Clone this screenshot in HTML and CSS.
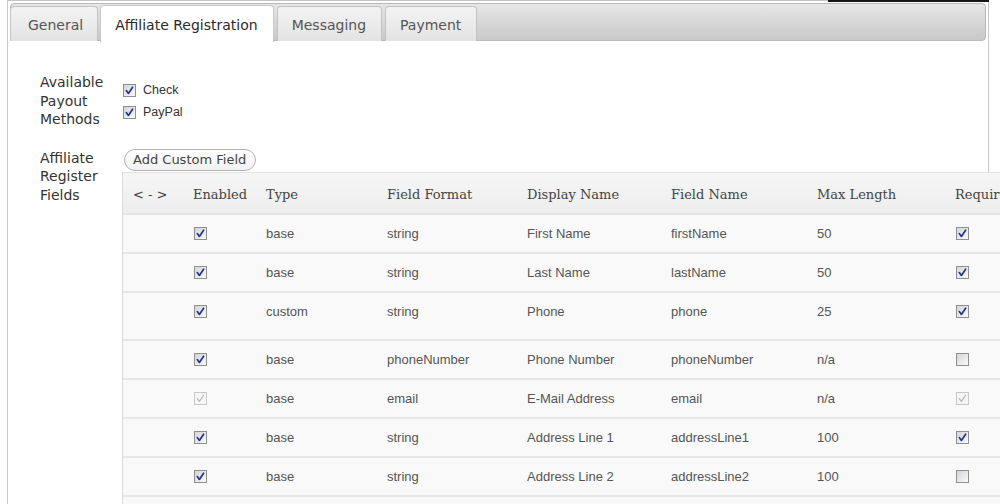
FILE: index.html
```html
<!DOCTYPE html>
<html>
<head>
<meta charset="utf-8">
<title>Affiliate Settings</title>
<link rel="stylesheet" href="styles.css">
</head>
<body>
<div class="panel">
  <div class="tabbar">
    <div class="tab first">General</div>
    <div class="tab active">Affiliate Registration</div>
    <div class="tab">Messaging</div>
    <div class="tab">Payment</div>
  </div>
  <div class="content">
    <div class="label">Available<br>Payout<br>Methods</div>
    <div class="methods">
      <div class="method"><span class="cb on"><svg viewBox="0 0 11 11"><path d="M2.3 5.6 L4.4 8.4 L8.6 2.2"/></svg></span>Check</div>
      <div class="method"><span class="cb on"><svg viewBox="0 0 11 11"><path d="M2.3 5.6 L4.4 8.4 L8.6 2.2"/></svg></span>PayPal</div>
    </div>
    <div class="label">Affiliate<br>Register<br>Fields</div>
    <div class="fields">
      <div class="btn">Add Custom Field</div>
      <table class="grid">
        <colgroup>
          <col class="c-move"><col class="c-en"><col class="c-type"><col class="c-fmt"><col class="c-disp"><col class="c-name"><col class="c-max"><col class="c-req">
        </colgroup>
        <thead>
          <tr><th>&lt; - &gt;</th><th>Enabled</th><th>Type</th><th>Field Format</th><th>Display Name</th><th>Field Name</th><th>Max Length</th><th>Required</th></tr>
        </thead>
        <tbody>
          <tr>
            <td></td>
            <td><span class="cb on"><svg viewBox="0 0 11 11"><path d="M2.3 5.6 L4.4 8.4 L8.6 2.2"/></svg></span></td>
            <td>base</td><td>string</td><td>First Name</td><td>firstName</td><td>50</td>
            <td><span class="cb on"><svg viewBox="0 0 11 11"><path d="M2.3 5.6 L4.4 8.4 L8.6 2.2"/></svg></span></td>
          </tr>
          <tr>
            <td></td>
            <td><span class="cb on"><svg viewBox="0 0 11 11"><path d="M2.3 5.6 L4.4 8.4 L8.6 2.2"/></svg></span></td>
            <td>base</td><td>string</td><td>Last Name</td><td>lastName</td><td>50</td>
            <td><span class="cb on"><svg viewBox="0 0 11 11"><path d="M2.3 5.6 L4.4 8.4 L8.6 2.2"/></svg></span></td>
          </tr>
          <tr class="tall">
            <td></td>
            <td><span class="cb on"><svg viewBox="0 0 11 11"><path d="M2.3 5.6 L4.4 8.4 L8.6 2.2"/></svg></span></td>
            <td>custom</td><td>string</td><td>Phone</td><td>phone</td><td>25</td>
            <td><span class="cb on"><svg viewBox="0 0 11 11"><path d="M2.3 5.6 L4.4 8.4 L8.6 2.2"/></svg></span></td>
          </tr>
          <tr>
            <td></td>
            <td><span class="cb on"><svg viewBox="0 0 11 11"><path d="M2.3 5.6 L4.4 8.4 L8.6 2.2"/></svg></span></td>
            <td>base</td><td>phoneNumber</td><td>Phone Number</td><td>phoneNumber</td><td>n/a</td>
            <td><span class="cb"></span></td>
          </tr>
          <tr>
            <td></td>
            <td><span class="cb dis"><svg viewBox="0 0 11 11"><path d="M2.3 5.6 L4.4 8.4 L8.6 2.2"/></svg></span></td>
            <td>base</td><td>email</td><td>E-Mail Address</td><td>email</td><td>n/a</td>
            <td><span class="cb dis"><svg viewBox="0 0 11 11"><path d="M2.3 5.6 L4.4 8.4 L8.6 2.2"/></svg></span></td>
          </tr>
          <tr>
            <td></td>
            <td><span class="cb on"><svg viewBox="0 0 11 11"><path d="M2.3 5.6 L4.4 8.4 L8.6 2.2"/></svg></span></td>
            <td>base</td><td>string</td><td>Address Line 1</td><td>addressLine1</td><td>100</td>
            <td><span class="cb on"><svg viewBox="0 0 11 11"><path d="M2.3 5.6 L4.4 8.4 L8.6 2.2"/></svg></span></td>
          </tr>
          <tr>
            <td></td>
            <td><span class="cb on"><svg viewBox="0 0 11 11"><path d="M2.3 5.6 L4.4 8.4 L8.6 2.2"/></svg></span></td>
            <td>base</td><td>string</td><td>Address Line 2</td><td>addressLine2</td><td>100</td>
            <td><span class="cb"></span></td>
          </tr>
          <tr>
            <td></td>
            <td><span class="cb on"><svg viewBox="0 0 11 11"><path d="M2.3 5.6 L4.4 8.4 L8.6 2.2"/></svg></span></td>
            <td>base</td><td>string</td><td>City</td><td>city</td><td>50</td>
            <td><span class="cb"></span></td>
          </tr>
        </tbody>
      </table>
    </div>
  </div>
</div>
</body>
</html>
```

FILE: styles.css
```css
html, body {
  margin: 0;
  padding: 0;
  overflow: hidden;
  background: #fff;
}

body {
  width: 1000px;
  height: 504px;
  font-family: "DejaVu Sans", Verdana, sans-serif;
  color: #333;
}

.panel {
  position: relative;
  box-sizing: border-box;
  margin-left: 7px;
  width: 982px;
  height: 504px;
  border-left: 1px solid #c9c9c9;
  border-right: 1px solid #c9c9c9;
  border-top: 1px solid #c4c4c4;
  padding: 2px 2px 0;
}

.panel::after {
  content: "";
  position: absolute;
  top: -1px;
  left: 820px;
  width: 161px;
  height: 2px;
  background: #151515;
}

/* ---------- tabs ---------- */
.tabbar {
  box-sizing: border-box;
  height: 38px;
  display: flex;
  align-items: flex-end;
  border: 1px solid #b9b9b9;
  border-radius: 4px;
  background: linear-gradient(#e6e6e6, #c9c9c9);
}

.tab {
  box-sizing: border-box;
  height: 35px;
  margin-bottom: -1px;
  margin-right: 3px;
  padding: 2px 15px 0 14px;
  line-height: 32px;
  font-size: 14px;
  color: #555;
  border: 1px solid #c3c3c3;
  border-bottom: none;
  border-radius: 4px 4px 0 0;
  background: linear-gradient(#f3f3f3, #e3e3e3);
  white-space: nowrap;
}

.tab.first {
  margin-left: -1px;
  margin-right: 2px;
  padding-left: 17px;
  padding-right: 14px;
}

.tab.active {
  height: 37px;
  margin-bottom: -2px;
  padding-top: 3px;
  line-height: 32px;
  color: #2a2a2a;
  background: #fff;
  border-color: #c9c9c9;
}

/* ---------- form ---------- */
.content {
  display: grid;
  grid-template-columns: 82px minmax(0, 1fr);
  row-gap: 20px;
  padding: 32px 0 0 30px;
}

.label {
  font-size: 14px;
  line-height: 18.5px;
  color: #333;
}

.methods {
  margin-top: 6px;
}

.method {
  display: flex;
  align-items: center;
  height: 22px;
  font-family: "Liberation Sans", Arial, sans-serif;
  font-size: 12.5px;
  color: #333;
}

.method .cb {
  display: inline-block;
  margin-left: 1px;
  margin-right: 7px;
}

/* checkbox */
.cb {
  box-sizing: border-box;
  display: block;
  width: 13px;
  height: 13px;
  border: 1px solid #8e8f8f;
  background: linear-gradient(135deg, #d3d4d8, #fbfbfb);
}

.cb svg {
  display: block;
  width: 11px;
  height: 11px;
}

.cb svg path {
  fill: none;
  stroke: #23348a;
  stroke-width: 1.7;
  stroke-linecap: round;
  stroke-linejoin: round;
}

.cb.dis {
  border-color: #c8c8c8;
  background: #f6f6f6;
}

.cb.dis svg path {
  stroke: #b9b9b9;
  stroke-width: 1.2;
}

.btn {
  display: inline-block;
  box-sizing: border-box;
  height: 22px;
  margin-left: 2px;
  padding: 0 9px 0 8px;
  line-height: 20px;
  font-size: 13px;
  color: #444;
  border: 1px solid #b3b3b3;
  border-radius: 11px;
  background: linear-gradient(#ffffff, #f1f1f1);
}

/* ---------- table ---------- */
.grid {
  margin-top: 1px;
  width: 923px;
  table-layout: fixed;
  border-collapse: separate;
  border-spacing: 0;
  border-left: 1px solid #dadada;
  background: #f9f9f9;
}

.c-move { width: 60px; }
.c-en { width: 73px; }
.c-type { width: 121px; }
.c-fmt { width: 140px; }
.c-disp { width: 144px; }
.c-name { width: 146px; }
.c-max { width: 138px; }
.c-req { width: 100px; }

.grid th {
  height: 37px;
  padding: 3px 0 0 10px;
  text-align: left;
  font-family: "DejaVu Serif", Georgia, serif;
  font-size: 13px;
  font-weight: normal;
  color: #444;
  white-space: nowrap;
  background: linear-gradient(#f6f6f6, #ededed);
  border-top: 1px solid #e2e2e2;
  border-bottom: 2px solid #e4e4e4;
}

.grid td {
  padding: 11px 0 11px 10px;
  vertical-align: top;
  font-family: "Liberation Sans", Arial, sans-serif;
  font-size: 13px;
  line-height: 15px;
  color: #555;
  white-space: nowrap;
  border-bottom: 2px solid #e7e7e7;
}

.grid td .cb {
  margin: 1px 0 0 1px;
}

.grid tr.tall td {
  padding-bottom: 20px;
}
```
